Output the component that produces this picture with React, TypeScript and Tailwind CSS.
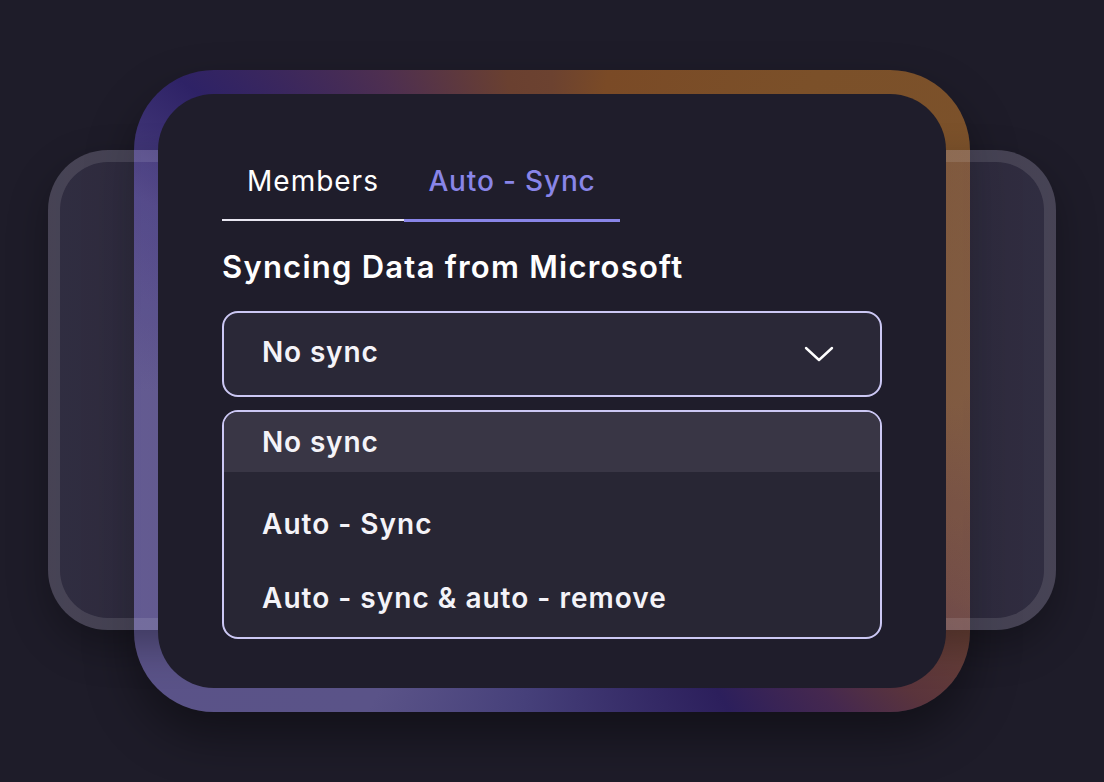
const options = ["No sync", "Auto - Sync", "Auto - sync & auto - remove"];

const Chevron = () => (
  <svg width="30" height="18" viewBox="0 0 30 18" fill="none">
    <polyline
      points="2,3 15,15 28,3"
      stroke="#ffffff"
      strokeWidth="2.4"
      strokeLinecap="round"
      strokeLinejoin="round"
    />
  </svg>
);

export default function App() {
  return (
    <div className="flex h-screen w-full items-center justify-center overflow-hidden bg-[#1e1c29] font-['Inter',sans-serif]">
      <div className="relative h-[642px] w-[836px] rounded-[80px] bg-[conic-gradient(from_0deg_at_50%_50%,#6c4230_0deg,#7a4a26_10deg,#7b5029_40deg,#7c532d_90deg,#6e4535_117deg,#5a343c_130deg,#45284f_138deg,#2c1f5c_151deg,#46407a_185deg,#5a5388_210deg,#5a5288_270deg,#4a4080_295deg,#2e2266_310deg,#4e2f50_332deg,#6a4030_352deg,#6c4230_360deg)] p-[24px] shadow-[0_24px_48px_rgba(0,0,0,0.4)]">
        {/* card peeking out behind */}
        <div className="absolute left-[-86px] top-[80px] h-[480px] w-[1008px] rounded-[60px] border-[12px] border-white/[0.11] bg-linear-to-r from-[#a497d4]/[0.14] via-[#a497d4]/[0.04] to-[#a497d4]/[0.14] shadow-[0_16px_40px_rgba(0,0,0,0.3)]" />

        <div className="relative flex h-full flex-col rounded-[56px] bg-[#1f1d2b] px-16 pt-[69px]">
          <div className="flex items-start">
            <div className="w-[182px] border-b-2 border-[#e8e6f1] pb-[20px] text-center text-[28px] leading-[36px] tracking-[0.035em] text-white">
              Members
            </div>
            <div className="w-[216px] border-b-[3px] border-[#8985e8] pb-[20px] text-center text-[28px] font-medium leading-[36px] tracking-[0.03em] text-[#8985e8]">
              Auto - Sync
            </div>
          </div>

          <h2 className="mt-[27px] text-[31px] font-semibold leading-[36px] tracking-[0.04em] text-white">
            Syncing Data from Microsoft
          </h2>

          <div className="mt-[26px] flex h-[86px] items-center justify-between rounded-[16px] border-2 border-[#ccc8f4] bg-[#2a2837] pl-[38px] pr-[46px]">
            <span className="mb-[5px] text-[28px] font-semibold tracking-[0.03em] text-[#f4f3f8]">No sync</span>
            <Chevron />
          </div>

          <div className="mt-[13px] flex h-[229px] flex-col overflow-hidden rounded-[16px] border-2 border-[#ccc8f4] bg-[#282634]">
            <div className="flex h-[60px] shrink-0 items-center bg-[#393645] pl-[38px] text-[28px] font-semibold tracking-[0.03em] text-[#f4f3f8]">
              {options[0]}
            </div>
            <div className="pt-[15px]">
              {options.slice(1).map((o) => (
                <div
                  key={o}
                  className="flex h-[74px] items-center pl-[38px] text-[28px] font-semibold tracking-[0.036em] text-[#f4f3f8]"
                >
                  {o}
                </div>
              ))}
            </div>
          </div>
        </div>
      </div>
    </div>
  );
}
